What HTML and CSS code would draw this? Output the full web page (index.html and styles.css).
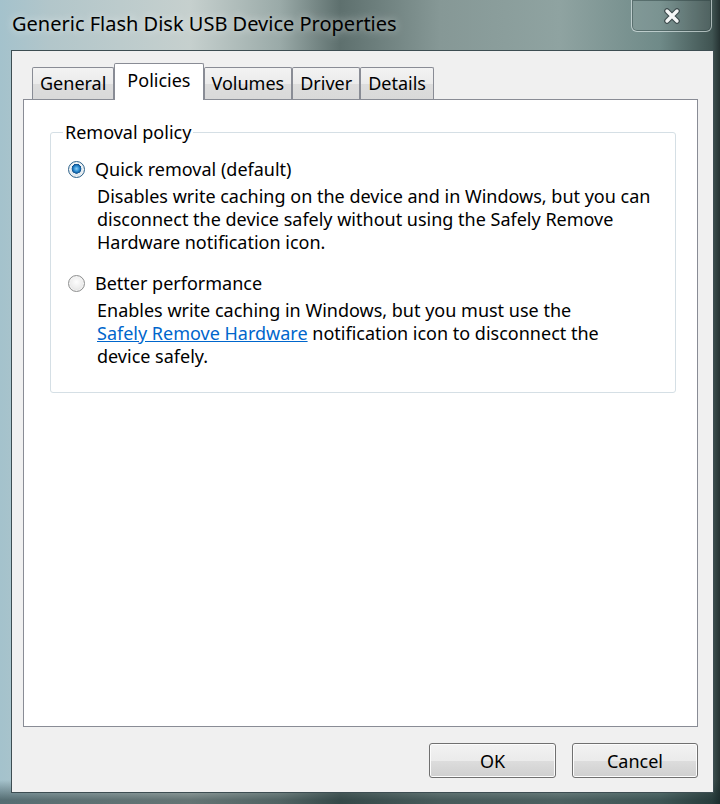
FILE: index.html
```html
<!DOCTYPE html>
<html lang="en">
<head>
  <meta charset="UTF-8" />
  <meta name="viewport" content="width=device-width, initial-scale=1.0" />
  <title>Generic Flash Disk USB Device Properties</title>
  <link rel="stylesheet" href="styles.css">
</head>
<body>
  <div class="window">
    <div class="titlebar">
      <span class="title">Generic Flash Disk USB Device Properties</span>
      <button class="close-btn" title="Close">
        <svg width="20" height="16" viewBox="0 0 20 16">
          <path d="M5 3 L15 13 M15 3 L5 13" stroke="#3c4a4c" stroke-width="5.6" stroke-linecap="round" fill="none"/>
          <path d="M5 3 L15 13 M15 3 L5 13" stroke="#f4f6f6" stroke-width="3.4" stroke-linecap="round" fill="none"/>
        </svg>
      </button>
    </div>

    <div class="client">
      <div class="tabs">
        <div class="tab">General</div>
        <div class="tab active">Policies</div>
        <div class="tab">Volumes</div>
        <div class="tab">Driver</div>
        <div class="tab">Details</div>
      </div>

      <div class="tab-page">
        <fieldset class="group">
          <legend>Removal policy</legend>

          <div class="option">
            <label class="option-label">
              <input type="radio" name="policy" class="radio" checked>
              Quick removal (default)
            </label>
            <p class="option-desc">Disables write caching on the device and in Windows, but you can<br>disconnect the device safely without using the Safely Remove<br>Hardware notification icon.</p>
          </div>

          <div class="option">
            <label class="option-label">
              <input type="radio" name="policy" class="radio">
              Better performance
            </label>
            <p class="option-desc">Enables write caching in Windows, but you must use the<br><a href="#" class="link">Safely Remove Hardware</a> notification icon to disconnect the<br>device safely.</p>
          </div>
        </fieldset>
      </div>

      <div class="buttons">
        <button class="btn">OK</button>
        <button class="btn">Cancel</button>
      </div>
    </div>
  </div>
</body>
</html>
```

FILE: styles.css
```css
body {
  margin: 0;
  font-family: "Noto Sans", "Open Sans", sans-serif;
  font-size: 18px;
  color: #000;
}
.window {
  width: 720px;
  height: 804px;
  box-sizing: border-box;
  padding-bottom: 11px;
  background:
    linear-gradient(180deg, rgba(255,255,255,0) 0, rgba(255,255,255,0) 780px, rgba(20,40,42,.55) 800px),
    linear-gradient(90deg, #a4c2cc 0, #b2c6ca 50px, #c6d0ce 190px, #9aaaa8 280px, #5e706e 340px, #869896 440px, #8fa3a1 560px, #6f8a88 660px, #405452 712px, #253232 720px);
}
.titlebar {
  height: 50px;
  display: flex;
  justify-content: space-between;
  align-items: flex-start;
}
.title {
  margin-left: 12px;
  line-height: 48px;
  font-size: 20px;
  text-shadow: 0 0 8px rgba(255,255,255,.7);
}
.close-btn {
  width: 81px;
  height: 32px;
  margin-right: 8px;
  padding: 0;
  display: flex;
  align-items: center;
  justify-content: center;
  background: rgba(255,255,255,.08);
  border: 1px solid rgba(230,240,240,.6);
  border-top: none;
  border-radius: 0 0 6px 6px;
  box-shadow: inset 0 0 0 1px rgba(40,60,60,.45);
}
.client {
  width: 703px;
  height: 743px;
  margin-left: 11px;
  box-sizing: border-box;
  border: 1px solid #3d4d52;
  padding: 12px 15px 0 11px;
  background: #f0f0f0;
}
.tabs {
  display: flex;
  align-items: flex-end;
  height: 36px;
  padding-left: 9px;
}
.tab {
  height: 32px;
  box-sizing: border-box;
  padding: 0 7px;
  line-height: 31px;
  border: 1px solid #898c95;
  border-bottom: none;
  border-radius: 2px 2px 0 0;
  background: linear-gradient(180deg, #f3f3f3 0, #ebebeb 50%, #dddddd 51%, #d9d9d9 100%);
}
.tab.active {
  height: 37px;
  margin-bottom: -1px;
  padding: 0 12px;
  line-height: 33px;
  background: #fff;
  position: relative;
  z-index: 1;
}
.tab-page {
  height: 628px;
  box-sizing: border-box;
  border: 1px solid #898c95;
  background: #fff;
  padding: 21px 21px 0 26px;
}
.group {
  margin: 0;
  padding: 14px 0 24px 17px;
  border: 1px solid #d5dfe5;
  border-radius: 3px;
  line-height: 23px;
}
.group legend {
  padding: 0 2px;
  margin-left: -5px;
  line-height: 23px;
}
.option + .option {
  margin-top: 18px;
}
.option-label {
  display: flex;
  align-items: center;
  gap: 10px;
}
.radio {
  appearance: none;
  -webkit-appearance: none;
  width: 17px;
  height: 17px;
  margin: 0;
  border-radius: 50%;
  border: 1px solid #8e8f8f;
  box-sizing: border-box;
  background: radial-gradient(circle at 50% 40%, #fdfdfd 0, #ececec 55%, #cfcfcf 100%);
  box-shadow: inset 0 0 0 1px #f4f4f4;
}
.radio:checked {
  background:
    radial-gradient(circle at 50% 45%, #8dd0f7 0, #2a8ad0 25%, #0d4f8c 42%, rgba(0,0,0,0) 46%),
    radial-gradient(circle at 50% 40%, #fdfdfd 0, #e4ecf2 55%, #c2ccd4 100%);
  border-color: #2c628b;
}
.option-desc {
  margin: 4px 0 0 29px;
}
.link {
  color: #0066cc;
  text-decoration: underline;
}
.buttons {
  display: flex;
  justify-content: flex-end;
  gap: 16px;
  margin-top: 16px;
}
.btn {
  width: 127px;
  height: 35px;
  font-family: inherit;
  font-size: 18px;
  color: #000;
  border: 1px solid #707070;
  border-radius: 3px;
  background: linear-gradient(180deg, #f2f2f2 0, #ebebeb 50%, #dddddd 51%, #cfcfcf 100%);
  box-shadow: inset 0 0 0 1px #fcfcfc;
}
.btn + .btn {
  width: 126px;
}
```
